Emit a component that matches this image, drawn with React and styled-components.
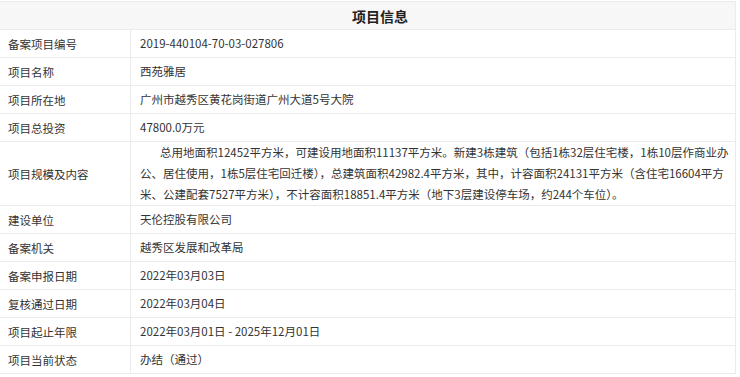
import React from "react";
import styled, { createGlobalStyle } from "styled-components";

const Global = createGlobalStyle`
  html, body { margin: 0; padding: 0; background: #fff; }
  body { padding-top: 1px; font-family: "Noto Sans CJK SC", "Noto Sans", sans-serif; color: #333; }
`;

const Table = styled.div`
  width: 735px;
  border-top: 1px solid #ebebeb;
  border-right: 1px solid #ebebeb;
  box-sizing: border-box;
  width: 736px;
`;

const Header = styled.div`
  height: 27px;
  background: #f7f7f7;
  border-bottom: 1px solid #ebebeb;
  display: flex;
  align-items: center;
  justify-content: center;
  padding-left: 25px;
  font-size: 14px;
  font-weight: bold;
  color: #222;
`;

const Row = styled.div`
  display: grid;
  grid-template-columns: 131px 1fr;
  border-bottom: 1px solid #ebebeb;
  min-height: 27px;
`;

const Label = styled.div`
  border-right: 1px solid #ebebeb;
  padding-left: 8px;
  display: flex;
  align-items: center;
  font-size: 11.5px;
  color: #333;
`;

const Value = styled.div`
  padding: ${(p) => (p.$multi ? "0 8px 0 9px" : "0 9px")};
  display: flex;
  align-items: center;
  font-size: 11.5px;
  color: #333;
  line-height: ${(p) => (p.$multi ? "21px" : "27px")};
`;

const Para = styled.div`
  text-indent: 20px;
  white-space: nowrap;
`;

const rows = [
  ["备案项目编号", "2019-440104-70-03-027806"],
  ["项目名称", "西苑雅居"],
  ["项目所在地", "广州市越秀区黄花岗街道广州大道5号大院"],
  ["项目总投资", "47800.0万元"],
  [
    "项目规模及内容",
    <Para key="p">
      总用地面积12452平方米，可建设用地面积11137平方米。新建3栋建筑（包括1栋32层住宅楼，1栋10层作商业办
      <br />
      公、居住使用，1栋5层住宅回迁楼），总建筑面积42982.4平方米，其中，计容面积24131平方米（含住宅16604平方
      <br />
      米、公建配套7527平方米），不计容面积18851.4平方米（地下3层建设停车场，约244个车位）。
    </Para>,
    true,
  ],
  ["建设单位", "天伦控股有限公司"],
  ["备案机关", "越秀区发展和改革局"],
  ["备案申报日期", "2022年03月03日"],
  ["复核通过日期", "2022年03月04日"],
  ["项目起止年限", "2022年03月01日 - 2025年12月01日"],
  ["项目当前状态", "办结（通过）"],
];

export default function App() {
  return (
    <>
      <Global />
      <Table>
        <Header>项目信息</Header>
        {rows.map(([k, v, multi]) => (
          <Row key={k}>
            <Label>{k}</Label>
            <Value $multi={multi}>{v}</Value>
          </Row>
        ))}
      </Table>
    </>
  );
}
